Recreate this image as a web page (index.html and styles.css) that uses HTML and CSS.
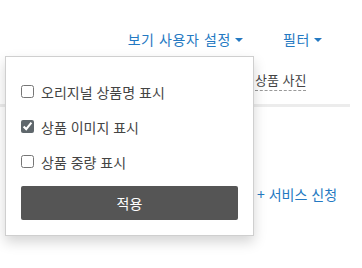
FILE: index.html
```html
<!DOCTYPE html>
<html lang="ko">
<head>
<meta charset="utf-8">
<link rel="stylesheet" href="styles.css">
</head>
<body>
<div class="page">
  <nav class="topnav">
    <a class="navlink">보기 사용자 설정<span class="caret"></span></a>
    <a class="navlink">필터<span class="caret"></span></a>
  </nav>
  <div class="tabs">
    <span class="tab">상품 사진</span>
  </div>
  <div class="actions">
    <a class="service">+ 서비스 신청</a>
  </div>

  <div class="dropdown">
    <label class="opt"><input type="checkbox"><span>오리지널 상품명 표시</span></label>
    <label class="opt"><input type="checkbox" checked><span>상품 이미지 표시</span></label>
    <label class="opt"><input type="checkbox"><span>상품 중량 표시</span></label>
    <button class="apply">적용</button>
  </div>
</div>
</body>
</html>
```

FILE: styles.css
```css
html, body {
  margin: 0;
  padding: 0;
  background: #fff;
}
body {
  font-family: "Noto Sans CJK KR", "Noto Sans", sans-serif;
  font-size: 14px;
  color: #444;
}
.page {
  position: relative;
  width: 362px;
  height: 268px;
  overflow: hidden;
}
.topnav {
  display: flex;
  justify-content: flex-end;
  gap: 40px;
  padding: 29px 40px 0 0;
  height: 20px;
  line-height: 20px;
}
.navlink {
  color: #2479c2;
  display: flex;
  align-items: center;
  letter-spacing: 0.6px;
}
.caret {
  display: inline-block;
  width: 0;
  height: 0;
  margin-left: 4px;
  margin-top: 2px;
  border-left: 4px solid transparent;
  border-right: 4px solid transparent;
  border-top: 4px solid #2479c2;
}
.tabs {
  margin-top: 20px;
  width: 350px;
  height: 38px;
  border-bottom: 3px solid #ececec;
  padding-left: 255px;
  box-sizing: border-box;
}
.tab {
  display: inline-block;
  font-size: 13px;
  line-height: 20px;
  border-bottom: 1px dashed #999;
  color: #444;
}
.actions {
  padding: 77px 0 0 257px;
  line-height: 20px;
}
.service {
  color: #2479c2;
}
.dropdown {
  position: absolute;
  left: 5px;
  top: 56px;
  width: 249px;
  box-sizing: border-box;
  padding: 17px 15px 15px;
  background: #fff;
  border: 1px solid #cfcfcf;
  box-shadow: 0 6px 12px rgba(0, 0, 0, 0.17);
  display: flex;
  flex-direction: column;
}
.opt {
  display: flex;
  align-items: center;
  height: 35px;
  color: #444;
}
.opt input {
  width: 13px;
  height: 13px;
  margin: 0 7px 0 0;
  accent-color: #5f676c;
}
.apply {
  margin-top: 7px;
  height: 34px;
  border: 0;
  border-radius: 2px;
  background: #555;
  color: #fff;
  font-family: inherit;
  font-size: 14px;
}
```
